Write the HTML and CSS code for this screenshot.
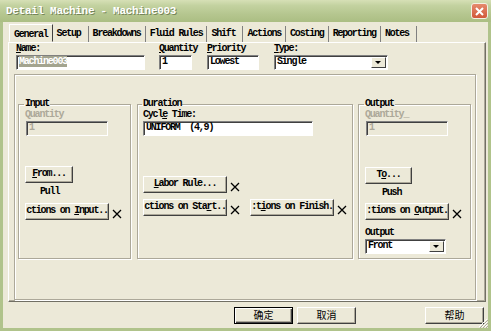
FILE: index.html
```html
<!DOCTYPE html>
<html lang="en">
  <head>
    <meta charset="UTF-8" />
    <title>Detail Machine - Machine003</title>
    <link rel="stylesheet" href="styles.css">
  </head>
  <body>
    <div class="window">
      <div class="titlebar">
        <span class="title">Detail Machine - Machine003</span>
        <span class="close">
          <svg width="9" height="9" viewBox="0 0 9 9"><path d="M1 1L8 8M8 1L1 8" stroke="#fff" stroke-width="2" /></svg>
        </span>
      </div>

      <div class="main">
        <div class="tabs">
          <div class="tab active">General</div>
          <div class="tab">Setup</div>
          <div class="tab">Breakdowns</div>
          <div class="tab">Fluid Rules</div>
          <div class="tab">Shift</div>
          <div class="tab">Actions</div>
          <div class="tab">Costing</div>
          <div class="tab">Reporting</div>
          <div class="tab">Notes</div>
        </div>

        <div class="panel">
          <div class="fields">
            <div class="field f-name">
              <label><u>N</u>ame:</label>
              <div class="input"><span class="sel">Machine003</span></div>
            </div>
            <div class="field f-qty">
              <label><u>Q</u>uantity</label>
              <div class="input">1</div>
            </div>
            <div class="field f-prio">
              <label><u>P</u>riority</label>
              <div class="input">Lowest</div>
            </div>
            <div class="field f-type">
              <label><u>T</u>ype:</label>
              <div class="select">Single<span class="drop"></span></div>
            </div>
          </div>

          <div class="frame">
            <fieldset class="group g-input">
              <legend>Input</legend>
              <div class="glabel grey">Quantity</div>
              <div class="input disabled w-qty">1</div>
              <div class="btn b-from"><u>F</u>rom...</div>
              <div class="note n-pull">Pull</div>
              <div class="row r-first">
                <div class="btn b-wide">ctions on <u>I</u>nput..</div>
                <svg class="x" width="10" height="10" viewBox="0 0 10 10"><path d="M1 1L9 9M9 1L1 9" /></svg>
              </div>
            </fieldset>

            <fieldset class="group g-duration">
              <legend>Duration</legend>
              <div class="glabel">Cycl<u>e</u> Time:</div>
              <div class="input w-cycle">UNIFORM&nbsp; (4,9)</div>
              <div class="row r-labor">
                <div class="btn b-wide"><u>L</u>abor Rule...</div>
                <svg class="x" width="10" height="10" viewBox="0 0 10 10"><path d="M1 1L9 9M9 1L1 9" /></svg>
              </div>
              <div class="row r-first">
                <div class="btn b-wide">ctions on Sta<u>r</u>t..</div>
                <svg class="x" width="10" height="10" viewBox="0 0 10 10"><path d="M1 1L9 9M9 1L1 9" /></svg>
                <div class="btn b-wide b-finish">:t<u>i</u>ons on Finish.</div>
                <svg class="x" width="10" height="10" viewBox="0 0 10 10"><path d="M1 1L9 9M9 1L1 9" /></svg>
              </div>
            </fieldset>

            <fieldset class="group g-output">
              <legend>Output</legend>
              <div class="glabel grey">Quantity_</div>
              <div class="input disabled w-qty">1</div>
              <div class="btn b-to">T<u>o</u>...</div>
              <div class="note n-push">Push</div>
              <div class="row r-out">
                <div class="btn b-wide">:tions on <u>O</u>utput.</div>
                <svg class="x" width="10" height="10" viewBox="0 0 10 10"><path d="M1 1L9 9M9 1L1 9" /></svg>
              </div>
              <div class="glabel l-output">Output</div>
              <div class="select w-front">Front<span class="drop"></span></div>
            </fieldset>
          </div>
        </div>

        <div class="footer">
          <div class="btn cjk default">确定</div>
          <div class="btn cjk">取消</div>
          <div class="btn cjk b-help">帮助</div>
          <svg class="grip" width="10" height="10" viewBox="0 0 10 10">
            <path d="M9 1L1 9M9 4L4 9M9 7L7 9" stroke="#fff" stroke-width="1" />
            <path d="M10 2L2 10M10 5L5 10M10 8L8 10" stroke="#aca899" stroke-width="1" />
          </svg>
        </div>
      </div>
    </div>
  </body>
</html>
```

FILE: styles.css
```css
body {
  margin: 0;
  width: 491px;
  height: 331px;
  overflow: hidden;
  background-color: #ece9d8;
  font-family: "Liberation Mono", monospace;
  font-size: 10px;
  font-weight: bold;
  letter-spacing: -1.2px;
  color: #000;
}

.window {
  width: 491px;
  height: 331px;
  display: flex;
  flex-direction: column;
}

.titlebar {
  flex: none;
  height: 22px;
  display: flex;
  align-items: center;
  justify-content: space-between;
  padding: 0 3px 0 6px;
  background: linear-gradient(to bottom, #d6e0b6 0%, #c3d2a0 25%, #b5c68f 65%, #abbe83 100%);
}

.title {
  color: #fff;
  font-size: 11px;
  letter-spacing: -0.3px;
  text-shadow: 1px 1px #75855a;
}

.close {
  width: 17px;
  height: 16px;
  box-sizing: border-box;
  border: 1px solid #f4efe4;
  border-radius: 3px;
  background: linear-gradient(to bottom, #e58a6d, #d2583a);
  display: flex;
  align-items: center;
  justify-content: center;
}

.main {
  flex: 1;
  position: relative;
  border: 3px solid #b0c38b;
  border-top: 0;
  background-color: #ece9d8;
}

/* tab strip */

.tabs {
  display: flex;
  height: 16px;
  margin: 4px 0 0 6px;
}

.tab {
  min-width: 36px;
  padding: 0 4px;
  line-height: 16px;
  box-sizing: border-box;
  border-right: 1px solid #808080;
}

.tab.active {
  position: relative;
  z-index: 1;
  height: 18px;
  margin-top: -2px;
  line-height: 19px;
  border: 1px solid;
  border-color: #fff #404040 #ece9d8 #fff;
  background-color: #ece9d8;
}

.panel {
  width: 478px;
  height: 260px;
  margin-left: 5px;
  box-sizing: border-box;
  padding: 1px 0 0 7px;
  border: 1px solid;
  border-color: #fff #716f64 #716f64 #fff;
  box-shadow: inset -1px -1px #aca899;
}

/* top fields */

.fields {
  display: flex;
}

.field label {
  display: block;
  line-height: 10px;
}

.f-name { width: 129px; margin-right: 14px; }
.f-qty { width: 33px; margin-right: 15px; }
.f-prio { width: 52px; margin-right: 15px; }
.f-type { width: 114px; }

.input,
.select {
  position: relative;
  height: 15px;
  margin-top: 1px;
  box-sizing: border-box;
  padding: 0 2px;
  line-height: 12px;
  background-color: #fff;
  border: 1px solid;
  border-color: #808080 #fff #fff #808080;
  box-shadow: inset 1px 1px #404040;
  white-space: nowrap;
  overflow: hidden;
}

.sel {
  background-color: #a3a48f;
  color: #fff;
}

.input.disabled {
  background-color: #ece9d8;
  color: #aca899;
}

.drop {
  position: absolute;
  right: 1px;
  top: 1px;
  width: 15px;
  height: 11px;
  box-sizing: border-box;
  border: 1px solid;
  border-color: #fff #404040 #404040 #fff;
  background-color: #ece9d8;
}

.drop::after {
  content: "";
  position: absolute;
  left: 3px;
  top: 3px;
  border-left: 3px solid transparent;
  border-right: 3px solid transparent;
  border-top: 3px solid #000;
}

/* main frame and groups */

.frame {
  width: 462px;
  height: 226px;
  margin: 4px 0 0 -2px;
  box-sizing: border-box;
  padding: 24px 0 0 3px;
  border: 1px solid #aca899;
  box-shadow: inset 1px 1px #fff, 1px 1px #fff;
  display: flex;
}

.group {
  height: 160px;
  min-width: 0;
  margin: 0;
  box-sizing: border-box;
  padding: 0;
  border: 1px solid #aca899;
  box-shadow: inset 1px 1px #fff, 1px 1px #fff;
}

.group legend {
  padding: 0 1px;
  margin-left: -1px;
  line-height: 10px;
}

.g-input { width: 113px; padding-left: 6px; margin-right: 6px; }
.g-duration { width: 216px; padding-left: 5px; margin-right: 5px; }
.g-output { width: 113px; padding-left: 6px; }

.glabel {
  margin-top: 1px;
  line-height: 10px;
}

.grey {
  color: #aca899;
}

.w-qty { width: 82px; margin-left: 1px; }
.w-cycle { width: 170px; }
.w-front { width: 81px; }

.note {
  line-height: 10px;
}

.n-pull { margin: 4px 0 0 15px; }
.n-push { margin: 4px 0 0 17px; }

.row {
  display: flex;
  align-items: center;
}

.x {
  flex: none;
  margin: 4px 0 0 3px;
  stroke: #000;
  stroke-width: 1.3;
}

.r-first { margin-top: 6px; }
.r-labor { margin-top: 40px; }
.r-out { margin-top: 5px; }
.l-output { margin-top: 8px; }

/* buttons */

.btn {
  height: 17px;
  box-sizing: border-box;
  border: 1px solid;
  border-color: #fff #404040 #404040 #fff;
  box-shadow: inset -1px -1px #aca899;
  background-color: #ece9d8;
  line-height: 14px;
  text-align: center;
  white-space: nowrap;
  overflow: hidden;
}

.b-from { width: 48px; margin-top: 30px; }
.b-to { width: 47px; margin-top: 31px; }
.b-wide { width: 84px; flex: none; }
.b-finish { margin-left: 10px; }

.footer {
  display: flex;
  justify-content: flex-end;
  padding: 5px 4px 0 0;
}

.cjk {
  width: 59px;
  margin-left: 4px;
  font-family: "Noto Sans CJK SC", sans-serif;
  font-weight: normal;
  font-size: 10px;
  letter-spacing: 0;
}

.default {
  border-color: #000;
  box-shadow: inset 1px 1px #fff, inset -1px -1px #404040, inset -2px -2px #aca899;
}

.b-help {
  margin-left: 69px;
}

.grip {
  position: absolute;
  right: 0;
  bottom: 0;
}
```
